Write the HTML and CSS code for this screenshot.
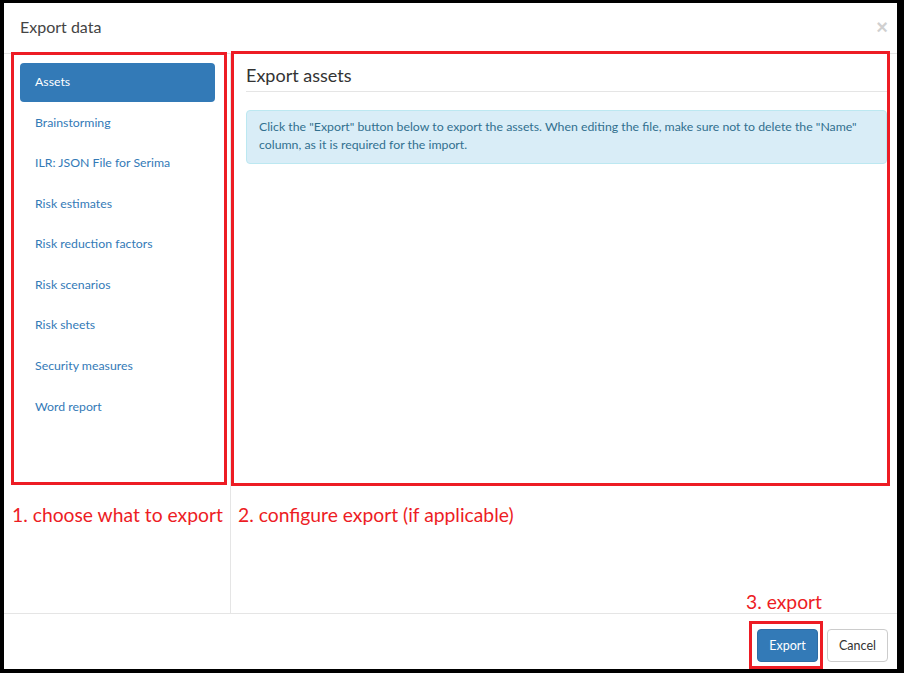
FILE: index.html
```html
<!DOCTYPE html>
<html lang="en">
<head>
<meta charset="utf-8">
<title>Export data</title>
<link rel="stylesheet" href="styles.css">
</head>
<body>
<div class="modal">
  <div class="modal-header">
    <h3 class="modal-title">Export data</h3>
    <button class="close" type="button">&times;</button>
  </div>
  <div class="modal-body">
    <div class="nav-col">
      <ul class="nav-pills">
        <li class="active"><a>Assets</a></li>
        <li><a>Brainstorming</a></li>
        <li><a>ILR: JSON File for Serima</a></li>
        <li><a>Risk estimates</a></li>
        <li><a>Risk reduction factors</a></li>
        <li><a>Risk scenarios</a></li>
        <li><a>Risk sheets</a></li>
        <li><a>Security measures</a></li>
        <li><a>Word report</a></li>
      </ul>
    </div>
    <div class="content-col">
      <h4 class="section-title">Export assets</h4>
      <div class="alert-info">Click the "Export" button below to export the assets. When editing the file, make sure not to delete the "Name" column, as it is required for the import.</div>
    </div>
  </div>
  <div class="modal-footer">
    <button class="btn btn-primary" type="button">Export</button>
    <button class="btn btn-default" type="button">Cancel</button>
  </div>

  <div class="mark mark-nav"></div>
  <div class="mark mark-content"></div>
  <div class="mark mark-export"></div>
  <div class="note note-1">1. choose what to export</div>
  <div class="note note-2">2. configure export (if applicable)</div>
  <div class="note note-3">3. export</div>
</div>
</body>
</html>
```

FILE: styles.css
```css
* { box-sizing: border-box; }

html, body {
  margin: 0;
  height: 673px;
  overflow: hidden;
}

body {
  background: #000;
  padding: 3px 7px 4px 4px;
  font-family: Lato, "Open Sans", "Liberation Sans", sans-serif;
  font-size: 12.3px;
  line-height: 1.42857;
  color: #333;
}

.modal {
  position: relative;
  width: 893px;
  height: 666px;
  background: #fff;
  display: flex;
  flex-direction: column;
}

.modal-header {
  height: 51px;
  flex: none;
  border-bottom: 1px solid #e5e5e5;
  display: flex;
  align-items: center;
  justify-content: space-between;
  padding: 0 9px 3px 16px;
}

.modal-title {
  margin: 0;
  font-size: 16px;
  font-weight: 400;
  color: #444;
  line-height: 20px;
}

.close {
  background: none;
  border: 0;
  padding: 0;
  font-family: "Liberation Sans", sans-serif;
  font-size: 20px;
  line-height: 20px;
  font-weight: 700;
  color: #000;
  opacity: 0.18;
}

.modal-body {
  flex: 1;
  display: flex;
  min-height: 0;
}

.nav-col {
  width: 227px;
  flex: none;
  border-right: 1px solid #e5e5e5;
  padding: 9px 15px 0 16px;
}

.nav-pills {
  list-style: none;
  margin: 0;
  padding: 0;
}

.nav-pills li + li { margin-top: 2px; }

.nav-pills a {
  display: block;
  padding: 10px 15px;
  color: #337ab7;
  border-radius: 4px;
  line-height: 18.57px;
}

.nav-pills .active a {
  background: #337ab7;
  color: #fff;
}

.content-col {
  flex: 1;
  padding: 12px 10px 0 15px;
}

.section-title {
  margin: 0 0 18px;
  padding-bottom: 5px;
  border-bottom: 1px solid #e5e5e5;
  font-size: 18px;
  font-weight: 400;
  line-height: 19.8px;
  color: #333;
}

.alert-info {
  background: #d9edf7;
  border: 1px solid #bce8f1;
  border-radius: 4px;
  color: #31708f;
  padding: 7px 12px 9px 12px;
  line-height: 18px;
}

.modal-footer {
  height: 56px;
  flex: none;
  border-top: 1px solid #e5e5e5;
  display: flex;
  justify-content: flex-end;
  align-items: flex-start;
  gap: 9px;
  padding: 15px 9px 0 0;
}

.btn {
  font-family: inherit;
  font-size: 12.5px;
  height: 33px;
  width: 61px;
  padding: 0;
  border-radius: 4px;
  border: 1px solid #ccc;
  background: #fff;
  color: #333;
}

.btn-primary {
  background: #337ab7;
  border-color: #2e6da4;
  color: #fff;
}

/* annotation overlays */
.mark {
  position: absolute;
  border: 3px solid #ed1c24;
}

.mark-nav { left: 7px; top: 49px; width: 216px; height: 433px; }
.mark-content { left: 227px; top: 48px; width: 659px; height: 435px; }
.mark-export { left: 745px; top: 618px; width: 74px; height: 48px; }

.note {
  position: absolute;
  color: #ed1c24;
  font-size: 19.3px;
  line-height: 20px;
  white-space: nowrap;
}

.note-1 { left: 8px; top: 502px; }
.note-2 { left: 234px; top: 502px; }
.note-3 { left: 742px; top: 589px; }
```
